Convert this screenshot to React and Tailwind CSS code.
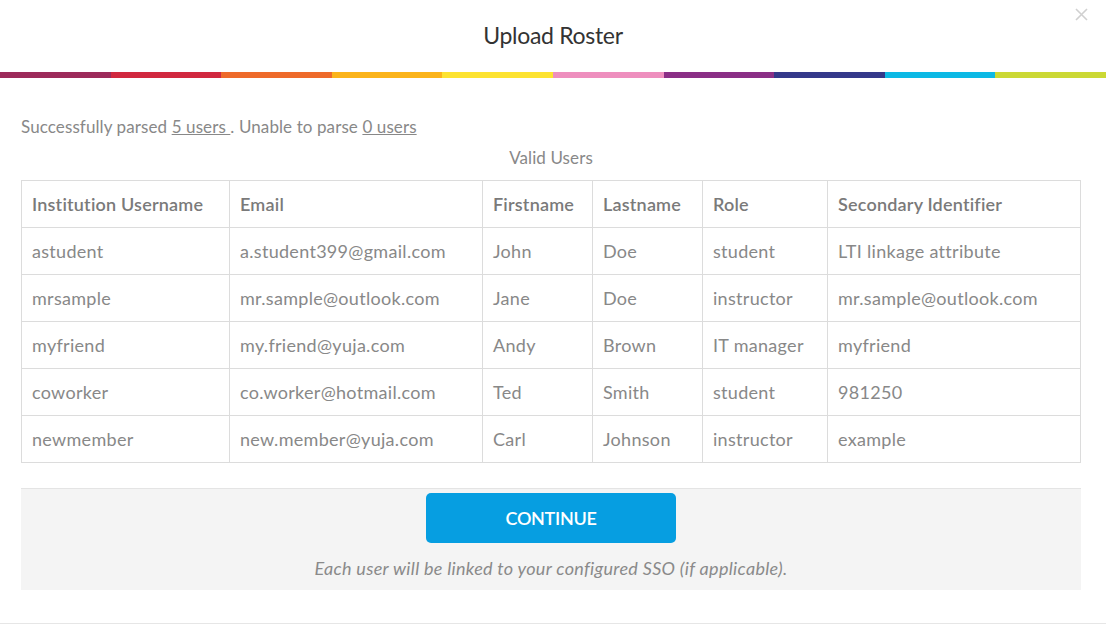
import React from "react";

const stripe = [
  "bg-[#9c2a5a]",
  "bg-[#d1283f]",
  "bg-[#ee6a2a]",
  "bg-[#fbb41b]",
  "bg-[#fde331]",
  "bg-[#ee8fbe]",
  "bg-[#8a2f86]",
  "bg-[#34398a]",
  "bg-[#0cb9e5]",
  "bg-[#cbd834]",
];

const cols = [
  { label: "Institution Username", w: "w-[208px]" },
  { label: "Email", w: "w-[253px]" },
  { label: "Firstname", w: "w-[110px]" },
  { label: "Lastname", w: "w-[110px]" },
  { label: "Role", w: "w-[125px]" },
  { label: "Secondary Identifier", w: "" },
];

const users = [
  ["astudent", "a.student399@gmail.com", "John", "Doe", "student", "LTI linkage attribute"],
  ["mrsample", "mr.sample@outlook.com", "Jane", "Doe", "instructor", "mr.sample@outlook.com"],
  ["myfriend", "my.friend@yuja.com", "Andy", "Brown", "IT manager", "myfriend"],
  ["coworker", "co.worker@hotmail.com", "Ted", "Smith", "student", "981250"],
  ["newmember", "new.member@yuja.com", "Carl", "Johnson", "instructor", "example"],
];

export default function App() {
  return (
    <div className="w-[1106px] h-[642px] bg-white font-['Lato',sans-serif] text-[#888] relative">
      {/* close */}
      <button className="absolute right-[18px] top-[8px]">
        <svg width="13" height="13" viewBox="0 0 13 13" stroke="#d0d0d0" strokeWidth="1.6" fill="none">
          <path d="M1 1l11 11M12 1L1 12" />
        </svg>
      </button>

      <div className="h-[72px] flex items-center justify-center pb-[2px]">
        <h1 className="text-[23px] text-[#333] tracking-[-0.3px]">Upload Roster</h1>
      </div>

      <div className="flex h-[6px]">
        {stripe.map((c, i) => (
          <div key={i} className={`flex-1 ${c}`} />
        ))}
      </div>

      <div className="pl-[21px] pr-[25px] pt-[39px] border-b border-[#e6e6e6] pb-[33px]">
        <p className="text-[17px] leading-[20px] tracking-[0.1px]">
          Successfully parsed <span className="underline">5 users </span>. Unable to parse{" "}
          <span className="underline">0 users</span>
        </p>
        <p className="text-center text-[17px] leading-[20px] mt-[11px] mb-[12px] tracking-[0.1px]">Valid Users</p>

        <table className="w-full border-collapse text-[18px]">
          <thead>
            <tr className="h-[47px]">
              {cols.map((c) => (
                <th
                  key={c.label}
                  className={`${c.w} border border-[#dcdcdc] text-left font-semibold text-[#7a7a7a] px-[10px] tracking-[0.2px]`}
                >
                  {c.label}
                </th>
              ))}
            </tr>
          </thead>
          <tbody>
            {users.map((u) => (
              <tr key={u[0]} className="h-[47px]">
                {u.map((v, i) => (
                  <td key={i} className="border border-[#dcdcdc] px-[10px] tracking-[0.3px]">
                    {v}
                  </td>
                ))}
              </tr>
            ))}
          </tbody>
        </table>

        <div className="mt-[25px] bg-[#f4f4f4] border-t border-[#e4e4e4] h-[102px] flex flex-col items-center">
          <button className="mt-[4px] w-[250px] h-[50px] rounded-[5px] bg-[#069ee1] text-white text-[18px] font-semibold tracking-[-0.3px]">
            CONTINUE
          </button>
          <p className="mt-[12px] italic text-[18px] text-[#8a8a8a] tracking-[0.3px]">
            Each user will be linked to your configured SSO (if applicable).
          </p>
        </div>
      </div>
    </div>
  );
}
